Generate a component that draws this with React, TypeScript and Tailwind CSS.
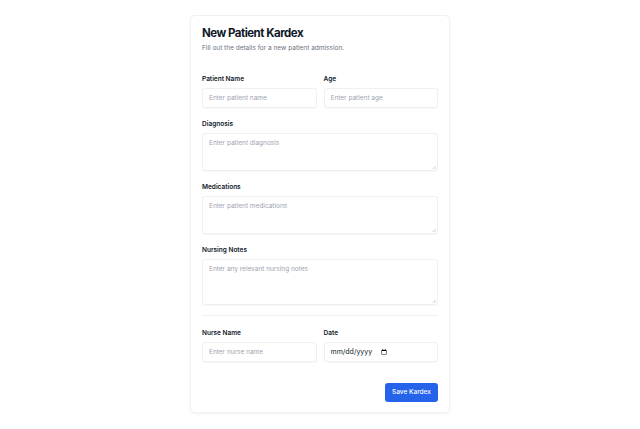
import React from "react";

const inputCls =
  "block w-full h-[20px] rounded-[3px] border border-[#eef0f2] bg-white px-[6px] text-[6.5px] text-gray-900 placeholder:text-[#9ca3af] outline-none shadow-[0_0.5px_1px_rgba(0,0,0,0.03)]";
const areaCls =
  "block w-full resize-none rounded-[3px] border border-[#eef0f2] bg-white px-[6px] py-[4px] text-[6.5px] leading-[10px] text-gray-900 placeholder:text-[#9ca3af] outline-none shadow-[0_0.5px_1px_rgba(0,0,0,0.03)]";
const labelCls = "block text-[6.5px] leading-[9px] font-semibold text-gray-900 mb-[4px]";

function Area({ h, placeholder }: { h: string; placeholder: string }) {
  return (
    <div className="relative">
      <textarea className={`${areaCls} ${h}`} placeholder={placeholder} />
      <svg
        className="absolute right-[2px] bottom-[2px] w-[4px] h-[4px]"
        viewBox="0 0 4 4"
        fill="none"
        stroke="#b5b9bf"
        strokeWidth="0.6"
      >
        <line x1="4" y1="0.5" x2="0.5" y2="4" />
        <line x1="4" y1="2.3" x2="2.3" y2="4" />
      </svg>
    </div>
  );
}

export default function App() {
  return (
    <div
      className="min-h-[429px] w-full bg-white flex justify-center pt-[15px]"
      style={{ fontFamily: "Inter, 'Liberation Sans', sans-serif" }}
    >
      <div className="w-[260px] h-[398px] rounded-[5px] border border-[#f0f1f3] bg-white shadow-[0_1px_3px_rgba(0,0,0,0.06)] px-[11px] pt-[9px] pb-[10px]">
        <h1 className="text-[11.5px] leading-[17px] font-bold text-gray-900 tracking-[-0.5px]">
          New Patient Kardex
        </h1>
        <p className="text-[6.5px] leading-[10px] text-[#6b7280] mt-[1px]">
          Fill out the details for a new patient admission.
        </p>

        <div className="mt-[22px] flex flex-col gap-[12px]">
          <div className="grid grid-cols-2 gap-[7px]">
            <div>
              <label className={labelCls}>Patient Name</label>
              <input className={inputCls} placeholder="Enter patient name" />
            </div>
            <div>
              <label className={labelCls}>Age</label>
              <input className={inputCls} placeholder="Enter patient age" />
            </div>
          </div>

          <div>
            <label className={labelCls}>Diagnosis</label>
            <Area h="h-[38px]" placeholder="Enter patient diagnosis" />
          </div>

          <div>
            <label className={labelCls}>Medications</label>
            <Area h="h-[38px]" placeholder="Enter patient medications" />
          </div>

          <div>
            <label className={labelCls}>Nursing Notes</label>
            <Area h="h-[46px]" placeholder="Enter any relevant nursing notes" />
          </div>
        </div>

        <div className="mt-[10px] border-t border-[#eef0f2] pt-[13px] grid grid-cols-2 gap-[7px]">
          <div>
            <label className={labelCls}>Nurse Name</label>
            <input className={inputCls} placeholder="Enter nurse name" />
          </div>
          <div>
            <label className={labelCls}>Date</label>
            <input
              type="date"
              className={`${inputCls} text-[7px] text-[#1f2937] [&::-webkit-datetime-edit]:flex-none [&::-webkit-datetime-edit]:p-0 [&::-webkit-datetime-edit-fields-wrapper]:p-0 [&::-webkit-datetime-edit-text]:p-0 [&::-webkit-datetime-edit-month-field]:p-0 [&::-webkit-datetime-edit-day-field]:p-0 [&::-webkit-datetime-edit-year-field]:p-0 [&::-webkit-calendar-picker-indicator]:w-[6px] [&::-webkit-calendar-picker-indicator]:h-[6px] [&::-webkit-calendar-picker-indicator]:p-0 [&::-webkit-calendar-picker-indicator]:m-0 [&::-webkit-calendar-picker-indicator]:ml-[-7px]`}
            />
          </div>
        </div>

        <div className="mt-[21px] flex justify-end">
          <button className="h-[19px] w-[53px] rounded-[3px] bg-[#2563eb] text-white text-[6.5px] font-medium">
            Save Kardex
          </button>
        </div>
      </div>
    </div>
  );
}
